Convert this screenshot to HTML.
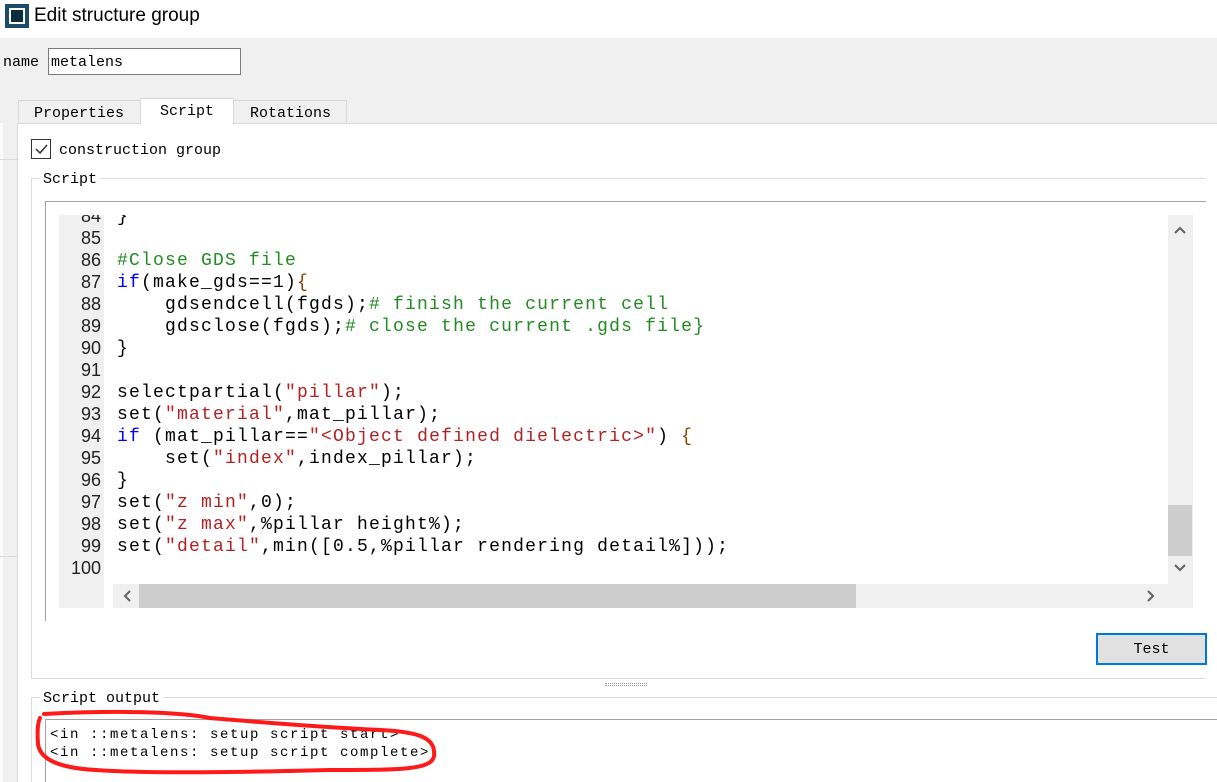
<!DOCTYPE html>
<html><head><meta charset="utf-8"><style>
*{margin:0;padding:0;box-sizing:border-box}
body{width:1217px;height:782px;overflow:hidden;background:#f0f0f0;position:relative;font-family:"Liberation Mono",monospace;color:#000}
.a{position:absolute}
.ui{font-family:"Liberation Mono",monospace;font-size:15px;white-space:pre}
.code{font-family:"Liberation Mono",monospace;font-size:18px;letter-spacing:1.2px;white-space:pre;line-height:22px}
.k{color:#0000ff}.c{color:#228b22}.s{color:#b22222}.b{color:#804000}
.ln{font-family:"Liberation Sans",sans-serif;font-size:18px;line-height:22px;text-align:right;color:#222}
</style></head><body>
<div class="a" style="left:0;top:0;width:1217px;height:38px;background:#fff"></div>
<div class="a" style="left:5px;top:4px;width:24px;height:24px;background:#1c4a68"></div>
<div class="a" style="left:9px;top:8px;width:16px;height:16px;border:2px solid #fff;background:#0d2c40"></div>
<div class="a" style="left:34px;top:5px;font-family:'Liberation Sans',sans-serif;font-size:19px">Edit structure group</div>

<div class="a ui" style="left:3px;top:54px">name</div>
<div class="a" style="left:48px;top:48px;width:193px;height:27px;background:#fff;border:1px solid #7a7a7a"></div>
<div class="a ui" style="left:51px;top:54px">metalens</div>

<div class="a" style="left:0;top:123px;width:3px;height:659px;background:#fbfbfb"></div>
<div class="a" style="left:0;top:159px;width:17px;height:1px;background:#d9d9d9"></div>
<div class="a" style="left:0;top:556px;width:17px;height:1px;background:#d9d9d9"></div>

<div class="a" style="left:18px;top:100px;width:123px;height:24px;background:#f0f0f0;border:1px solid #d9d9d9"></div>
<div class="a ui" style="left:34px;top:105px">Properties</div>
<div class="a" style="left:233px;top:100px;width:114px;height:24px;background:#f0f0f0;border:1px solid #d9d9d9"></div>
<div class="a ui" style="left:250px;top:105px">Rotations</div>
<div class="a" style="left:17px;top:123px;width:1200px;height:659px;background:#fff;border:1px solid #d9d9d9;border-right:none;border-bottom:none"></div>
<div class="a" style="left:140px;top:98px;width:94px;height:27px;background:#fff;border:1px solid #d9d9d9;border-bottom:none"></div>
<div class="a ui" style="left:160px;top:103px">Script</div>

<div class="a" style="left:31px;top:139px;width:20px;height:20px;border:1px solid #333;background:#fff"></div>
<svg class="a" style="left:31px;top:139px" width="20" height="20"><path d="M5 10 L9 14 L16 6" stroke="#333" stroke-width="1.5" fill="none"/></svg>
<div class="a ui" style="left:59px;top:142px">construction group</div>

<div class="a" style="left:31px;top:178px;width:1175px;height:501px;border:1px solid #dcdcdc;border-right:none"></div>
<div class="a ui" style="left:40px;top:171px;background:#fff;padding:0 3px">Script</div>

<div class="a" style="left:45px;top:201px;width:1161px;height:420px;border-top:1px solid #a0a0a0;border-left:1px solid #a0a0a0"></div>
<div class="a" style="left:59px;top:215px;width:45px;height:393px;background:#f0f0f0;overflow:hidden">
<div class="ln" style="width:45px;padding-right:3px;margin-top:-10px">84<br>85<br>86<br>87<br>88<br>89<br>90<br>91<br>92<br>93<br>94<br>95<br>96<br>97<br>98<br>99<br>100</div></div>
<div class="a" style="left:104px;top:215px;width:1064px;height:369px;overflow:hidden">
<div class="code" style="margin-left:13px;margin-top:-9px">}

<span class="c">#Close GDS file</span>
<span class="k">if</span>(make_gds==1)<span class="b">{</span>
    gdsendcell(fgds);<span class="c"># finish the current cell</span>
    gdsclose(fgds);<span class="c"># close the current .gds file}</span>
}

selectpartial(<span class="s">"pillar"</span>);
set(<span class="s">"material"</span>,mat_pillar);
<span class="k">if</span> (mat_pillar==<span class="s">"&lt;Object defined dielectric&gt;"</span>) <span class="b">{</span>
    set(<span class="s">"index"</span>,index_pillar);
}
set(<span class="s">"z min"</span>,0);
set(<span class="s">"z max"</span>,%pillar height%);
set(<span class="s">"detail"</span>,min([0.5,%pillar rendering detail%]));
</div></div>
<div class="a" style="left:1168px;top:215px;width:25px;height:393px;background:#f0f0f0"></div>
<div class="a" style="left:1168px;top:505px;width:24px;height:51px;background:#cdcdcd"></div>
<div class="a" style="left:113px;top:584px;width:1055px;height:24px;background:#f0f0f0"></div>
<div class="a" style="left:139px;top:584px;width:717px;height:24px;background:#cdcdcd"></div>
<svg class="a" style="left:1168px;top:215px" width="25" height="393"><g stroke="#606060" stroke-width="2" fill="none"><path d="M7 18 L12 13 L17 18"/><path d="M7 350 L12 355 L17 350"/></g></svg>
<svg class="a" style="left:113px;top:584px" width="1055" height="24"><g stroke="#606060" stroke-width="2" fill="none"><path d="M17 7 L12 12 L17 17"/><path d="M1035 7 L1040 12 L1035 17"/></g></svg>

<div class="a" style="left:1096px;top:633px;width:111px;height:32px;background:#e1e1e1;border:2px solid #0078d7"></div>
<div class="a ui" style="left:1096px;top:641px;width:111px;text-align:center">Test</div>

<div class="a" style="left:605px;top:683px;width:42px;height:3px;border-top:1px dotted #999;border-bottom:1px dotted #999"></div>

<div class="a" style="left:31px;top:697px;width:1186px;height:85px;border:1px solid #dcdcdc;border-right:none;border-bottom:none"></div>
<div class="a ui" style="left:40px;top:690px;background:#fff;padding:0 3px">Script output</div>
<div class="a" style="left:45px;top:719px;width:1172px;height:63px;border-top:1px solid #a0a0a0;border-left:1px solid #a0a0a0"></div>
<div class="a" style="left:50px;top:726px;font-family:'Liberation Mono',monospace;font-size:14px;letter-spacing:1.6px;line-height:18px;white-space:pre">&lt;in ::metalens: setup script start&gt;
&lt;in ::metalens: setup script complete&gt;</div>
<svg class="a" style="left:0;top:700px" width="460" height="82"><path d="M44 14 C120 10 180 12 210 18 C260 22 300 26 380 30 C420 32 436 38 434 56 C432 70 400 70 330 70 C250 72 150 74 96 70 C60 68 40 60 38 44 C37 30 38 22 40 18" stroke="#ff1a1a" stroke-width="4" fill="none" stroke-linecap="round"/></svg>
</body></html>
